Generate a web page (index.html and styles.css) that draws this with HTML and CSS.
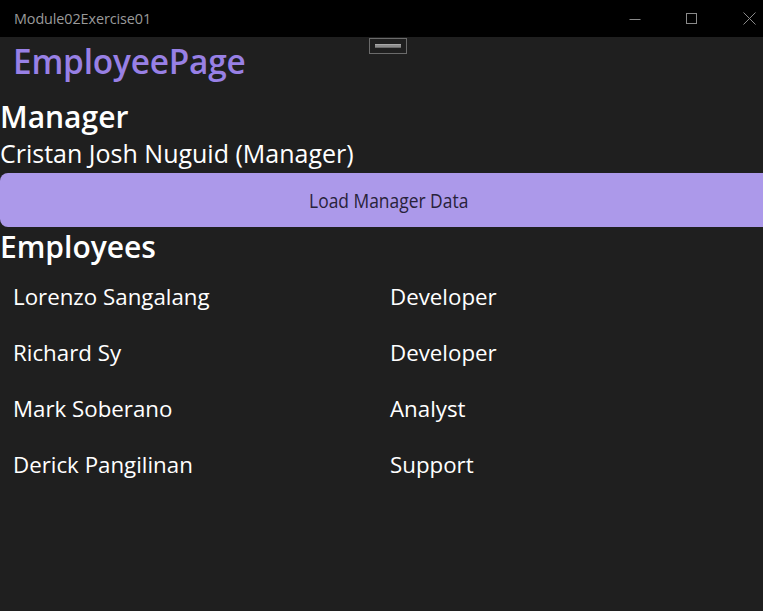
FILE: index.html
```html
<!DOCTYPE html>
<html>
<head>
<meta charset="utf-8">
<link rel="stylesheet" href="styles.css">
</head>
<body>
<div class="window">
  <header class="titlebar">
    <span class="app-title">Module02Exercise01</span>
    <div class="controls">
      <span class="ctl"><svg width="12" height="12" viewBox="0 0 12 12"><line x1="0.5" y1="6.5" x2="11.5" y2="6.5" stroke="#8a8a8a" stroke-width="1"/></svg></span>
      <span class="ctl"><svg width="12" height="12" viewBox="0 0 12 12"><rect x="0.5" y="0.5" width="10" height="10" fill="none" stroke="#8a8a8a" stroke-width="1"/></svg></span>
      <span class="ctl"><svg width="13" height="13" viewBox="0 0 13 13"><path d="M0.5 0.5 L12.5 12.5 M12.5 0.5 L0.5 12.5" stroke="#8a8a8a" stroke-width="1"/></svg></span>
    </div>
  </header>
  <main class="content">
    <div class="debug-bar"><span class="debug-line"></span></div>
    <h1 class="page-title">EmployeePage</h1>
    <h2 class="section manager">Manager</h2>
    <p class="manager-name">Cristan Josh Nuguid (Manager)</p>
    <button class="load-btn"><span class="btn-label">Load Manager Data</span></button>
    <h2 class="section employees">Employees</h2>
    <div class="list">
      <div class="row"><span class="name">Lorenzo Sangalang</span><span class="role">Developer</span></div>
      <div class="row"><span class="name">Richard Sy</span><span class="role">Developer</span></div>
      <div class="row"><span class="name">Mark Soberano</span><span class="role">Analyst</span></div>
      <div class="row"><span class="name">Derick Pangilinan</span><span class="role">Support</span></div>
    </div>
  </main>
</div>
</body>
</html>
```

FILE: styles.css
```css
* { box-sizing: border-box; }
html, body { margin: 0; padding: 0; }
body {
  width: 763px;
  height: 611px;
  overflow: hidden;
  background: #1f1f1f;
  font-family: "Open Sans", "Noto Sans", sans-serif;
  color: #ffffff;
}
.window { display: flex; flex-direction: column; height: 611px; overflow: hidden; }
.titlebar {
  height: 37px;
  background: #000000;
  display: flex;
  align-items: center;
  justify-content: space-between;
  padding-left: 14px;
  flex-shrink: 0;
}
.app-title {
  font-family: "Open Sans", sans-serif;
  font-size: 14.4px;
  color: #9a9a9a;
  letter-spacing: -0.1px;
}
.controls { display: flex; height: 37px; align-items: center; margin-right: -14.5px; }
.ctl {
  width: 57px;
  height: 37px;
  display: flex;
  align-items: center;
  justify-content: center;
}
.ctl svg { display: block; }
.content { position: relative; flex: 1; }
.debug-bar {
  position: absolute;
  left: 369px;
  top: 1px;
  width: 38px;
  height: 16px;
  border: 1px solid #6b6b6b;
  display: flex;
  align-items: center;
  justify-content: center;
}
.debug-line {
  width: 26px;
  height: 4px;
  background: #8c8c8c;
  border-top: 1px solid #a8a8a8;
  border-bottom: 1px solid #6a6a6a;
}
.page-title {
  margin: 2px 0 0 13px;
  font-size: 33.4px;
  font-weight: 600;
  color: #9880e5;
  line-height: 44px;
  letter-spacing: -0.2px;
}
.section {
  margin: 0;
  font-size: 30px;
  font-weight: 600;
  line-height: 38px;
}
.manager { margin-top: 15px; }
.manager-name {
  margin: 0;
  font-size: 25px;
  line-height: 34px;
}
.load-btn {
  display: flex;
  align-items: center;
  justify-content: center;
  width: 780px;
  height: 54px;
  margin: 3px 0 1px 0;
  border: none;
  border-radius: 8px;
  background: #ac99ea;
  color: #28223a;
  font-family: "Open Sans", sans-serif;
  font-size: 20.5px;
  padding: 0 2px 0 0;
}
.btn-label { display: inline-block; transform: scaleX(0.85); white-space: nowrap; }
.list { display: flex; flex-direction: column; padding-top: 16px; }
.row {
  display: grid;
  grid-template-columns: 377px 1fr;
  padding-left: 13px;
  height: 56px;
  align-items: start;
  font-size: 22.3px;
  line-height: 30px;
}
```
